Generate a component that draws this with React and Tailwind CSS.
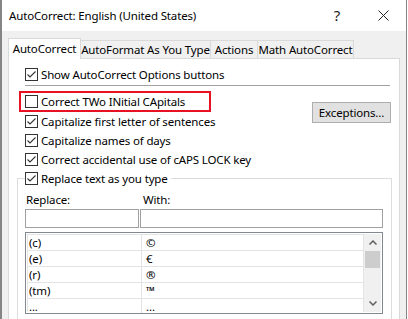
import { useState } from "react";

const font = { fontFamily: '"Noto Sans", "Open Sans", sans-serif' };

function Box({ checked }) {
  return (
    <svg width="13" height="13" viewBox="0 0 13 13" className="shrink-0">
      <rect x="0.5" y="0.5" width="12" height="12" fill="#fff" stroke="#333" />
      {checked && (
        <path d="M2.5 6.5 L5 9 L10.5 3.5" fill="none" stroke="#333" strokeWidth="1.1" />
      )}
    </svg>
  );
}

function Check({ label, checked, onToggle }) {
  return (
    <div className="flex h-[19px] items-center gap-[3px] whitespace-nowrap" onClick={onToggle}>
      <Box checked={checked} />
      <span>{label}</span>
    </div>
  );
}

const entries = [
  ["(c)", "©"],
  ["(e)", "€"],
  ["(r)", "®"],
  ["(tm)", "™"],
  ["...", "…"],
];

export default function App() {
  const [opts, setOpts] = useState({
    show: true,
    two: false,
    first: true,
    days: true,
    caps: true,
    replace: true,
  });
  const flip = (k) => setOpts({ ...opts, [k]: !opts[k] });

  return (
    <div className="h-[319px] w-[408px] overflow-hidden bg-white text-[11.5px] tracking-[-0.15px] text-black" style={font}>
      <div className="flex h-full w-[407px] flex-col border-l-2 border-r border-[#858585] bg-[#f0f0f0]">
        <div className="flex h-[31px] shrink-0 items-center bg-white pl-[7px]">
          <span className="flex-1">AutoCorrect: English (United States)</span>
          <div className="flex h-full w-[46px] items-center justify-center text-[15px] text-[#222]">?</div>
          <div className="flex h-full w-[46px] items-center justify-center">
            <svg width="11" height="11" viewBox="0 0 11 11">
              <path d="M0.5 0.5 L10.5 10.5 M10.5 0.5 L0.5 10.5" stroke="#222" strokeWidth="1" />
            </svg>
          </div>
        </div>

        <div className="px-[6px] pt-[7px]">
          <div className="flex items-end whitespace-nowrap">
            <div className="relative z-10 mb-[-1px] flex h-[21px] w-[73px] items-center justify-center border border-b-0 border-[#d9d9d9] bg-white pb-[1px]">
              AutoCorrect
            </div>
            <div className="flex h-[18px] w-[130px] items-center justify-center border-t border-r border-[#d9d9d9]">
              AutoFormat As You Type
            </div>
            <div className="flex h-[18px] w-[47px] items-center justify-center border-t border-r border-[#d9d9d9]">
              Actions
            </div>
            <div className="flex h-[18px] w-[96px] items-center justify-center border-t border-r border-[#d9d9d9]">
              Math AutoCorrect
            </div>
          </div>

          <div className="h-[300px] w-[392px] border border-[#d9d9d9] bg-white pt-[6px] pr-[7px] pl-[8px]">
            <div className="ml-2">
              <Check label="Show AutoCorrect Options buttons" checked={opts.show} onToggle={() => flip("show")} />
            </div>
            <div className="mt-[1px] mr-[2px] ml-2 h-px bg-[#a0a0a0]" />

            <div className="mt-[5px] flex justify-between">
              <div className="ml-[2px]">
                <div className="flex h-[21px] w-[192px] items-center border-2 border-[#e81123] pl-[4px]">
                  <Check label="Correct TWo INitial CApitals" checked={opts.two} onToggle={() => flip("two")} />
                </div>
                <div className="ml-[6px]">
                  <Check label="Capitalize first letter of sentences" checked={opts.first} onToggle={() => flip("first")} />
                  <Check label="Capitalize names of days" checked={opts.days} onToggle={() => flip("days")} />
                  <Check label="Correct accidental use of cAPS LOCK key" checked={opts.caps} onToggle={() => flip("caps")} />
                </div>
              </div>
              <button className="mt-[11px] mr-[1px] h-[21px] w-[79px] border border-[#adadad] bg-[#e1e1e1]">
                Exceptions...
              </button>
            </div>

            <fieldset className="border border-[#dcdcdc] pb-[10px] pl-[7px]">
              <legend className="pr-[3px]">
                <Check label="Replace text as you type" checked={opts.replace} onToggle={() => flip("replace")} />
              </legend>
              <div className="mt-[4px] flex h-[16px] items-center">
                <span className="w-[118px] pl-[1px]">Replace:</span>
                <span>With:</span>
              </div>
              <div className="mt-[1px] flex gap-[1px]">
                <input className="h-[19px] w-[114px] border border-[#a0a0a0] bg-white px-1 outline-none" />
                <input className="h-[19px] w-[243px] border border-[#a0a0a0] bg-white px-1 outline-none" />
              </div>
              <div className="mt-[4px] flex h-[82px] w-[358px] overflow-hidden border border-[#828790] bg-white p-[1px]">
                <div className="flex-1 border-x border-t border-[#e3e3e3]">
                  {entries.map(([a, b]) => (
                    <div key={a} className="flex h-[16px] items-center border-b border-[#e3e3e3]">
                      <span className="flex h-full w-[114px] items-center border-r border-[#e3e3e3] pl-[1px]">{a}</span>
                      <span className="pl-[4px]">{b}</span>
                    </div>
                  ))}
                </div>
                <div className="flex w-[17px] flex-col bg-[#f0f0f0]">
                  <div className="flex h-[17px] items-center justify-center">
                    <svg width="8" height="5" viewBox="0 0 8 5">
                      <path d="M0.5 4.5 L4 1 L7.5 4.5" fill="none" stroke="#606060" strokeWidth="1.5" />
                    </svg>
                  </div>
                  <div className="mx-[1px] h-[17px] bg-[#cdcdcd]" />
                  <div className="flex-1" />
                  <div className="flex h-[17px] items-center justify-center">
                    <svg width="8" height="5" viewBox="0 0 8 5">
                      <path d="M0.5 0.5 L4 4 L7.5 0.5" fill="none" stroke="#606060" strokeWidth="1.5" />
                    </svg>
                  </div>
                </div>
              </div>
            </fieldset>
          </div>
        </div>
      </div>
    </div>
  );
}
